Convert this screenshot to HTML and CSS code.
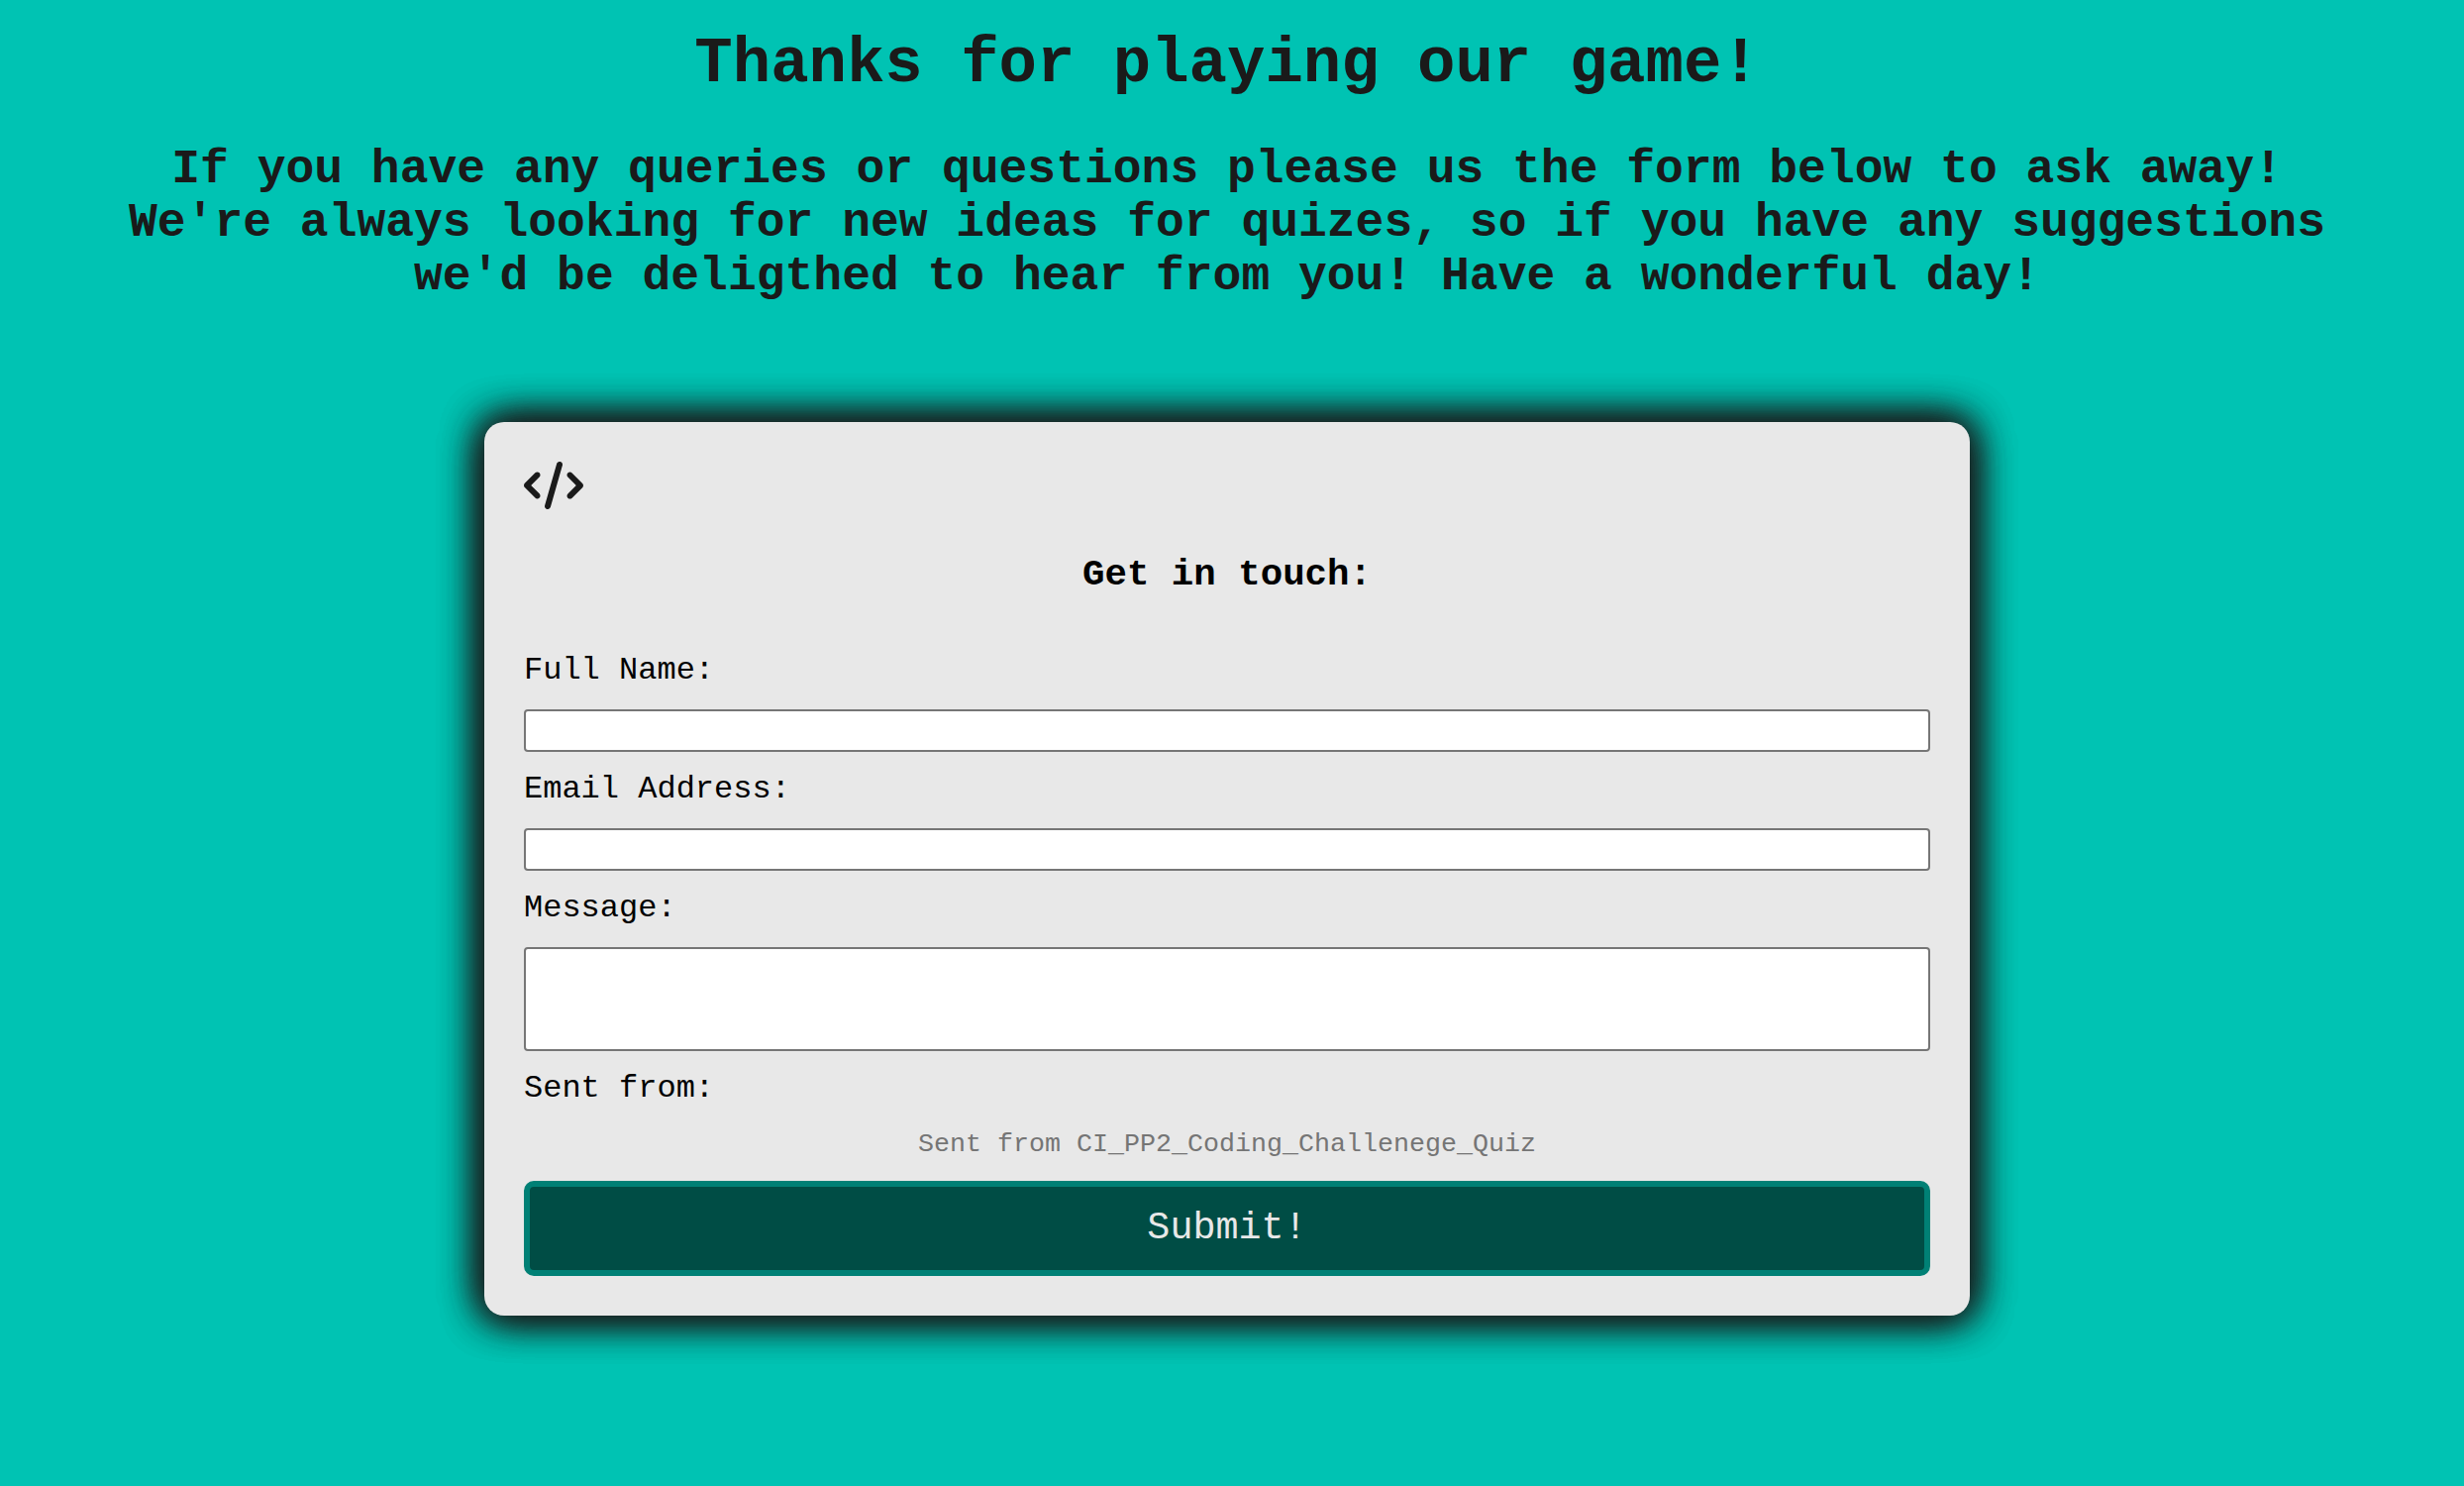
FILE: index.html
```html
<!DOCTYPE html>
<html lang="en">
<head>
<meta charset="utf-8">
<title>Coding Challenge Quiz</title>
<link rel="stylesheet" href="styles.css">
</head>
<body>
<main class="page">
  <h1 class="title">Thanks for playing our game!</h1>
  <h2 class="intro">If you have any queries or questions please us the form below to ask away!<br>We're always looking for new ideas for quizes, so if you have any suggestions<br>we'd be deligthed to hear from you! Have a wonderful day!</h2>
  <form class="card">
    <svg class="icon" viewBox="0 0 640 512" aria-hidden="true"><path fill="currentColor" d="M392.8 1.2c-17-4.9-34.7 5-39.6 22l-128 448c-4.9 17 5 34.7 22 39.6s34.7-5 39.6-22l128-448c4.9-17-5-34.7-22-39.6zm80.6 120.1c-12.5 12.5-12.5 32.8 0 45.3L562.7 256l-89.4 89.4c-12.5 12.5-12.5 32.8 0 45.3s32.8 12.5 45.3 0l112-112c12.5-12.5 12.5-32.8 0-45.3l-112-112c-12.5-12.5-32.8-12.5-45.3 0zm-306.7 0c-12.5-12.5-32.8-12.5-45.3 0l-112 112c-12.5 12.5-12.5 32.8 0 45.3l112 112c12.5 12.5 32.8 12.5 45.3 0s12.5-32.8 0-45.3L77.3 256l89.4-89.4c12.5-12.5 12.5-32.8 0-45.3z"/></svg>
    <h3 class="heading">Get in touch:</h3>
    <label class="label" for="name">Full Name:</label>
    <input class="field" id="name" type="text">
    <label class="label" for="email">Email Address:</label>
    <input class="field" id="email" type="email">
    <label class="label" for="message">Message:</label>
    <textarea class="field message" id="message"></textarea>
    <span class="label">Sent from:</span>
    <p class="source">Sent from CI_PP2_Coding_Challenege_Quiz</p>
    <button class="submit" type="submit">Submit!</button>
  </form>
</main>
</body>
</html>
```
FILE: styles.css
```css
* {
  box-sizing: border-box;
}

body {
  margin: 0;
  min-height: 1500px;
  background: #00c3b3;
  color: #1a1a1a;
  font-family: "Courier New", "Liberation Mono", monospace;
}

.page {
  display: flex;
  flex-direction: column;
  align-items: center;
  width: 2478px;
  padding-top: 29px;
}

.title {
  margin: 0 0 43px;
  font-size: 64px;
  line-height: 72px;
}

.intro {
  margin: 0 0 120px;
  font-size: 48px;
  line-height: 54px;
  text-align: center;
}

.card {
  display: flex;
  flex-direction: column;
  width: 1500px;
  padding: 40px;
  border-radius: 20px;
  background: #e8e8e8;
  box-shadow: 0 0 40px #1a1a1a, 0 0 40px #1a1a1a, 0 0 40px #1a1a1a;
  color: #000;
  font-size: 32px;
}

.icon {
  width: 60px;
  height: 48px;
  color: #1a1a1a;
}

.heading {
  margin: 45px 0 58px;
  font-size: 37.44px;
  line-height: 42px;
  text-align: center;
}

.label {
  line-height: 36px;
}

.field {
  height: 43px;
  margin: 21px 0 20px;
  padding: 2px;
  border: 2px solid #767676;
  border-radius: 4px;
  background: #fff;
  font: inherit;
}

.message {
  height: 105px;
  resize: none;
}

.source {
  margin: 23px 0 22px;
  color: #757575;
  font-size: 26.667px;
  line-height: 30px;
  text-align: center;
}

.submit {
  height: 96px;
  padding: 0;
  border: 6px solid #008075;
  border-radius: 10px;
  background: #004d45;
  color: #e8e8e8;
  font-family: inherit;
  font-size: 38.4px;
}
```
